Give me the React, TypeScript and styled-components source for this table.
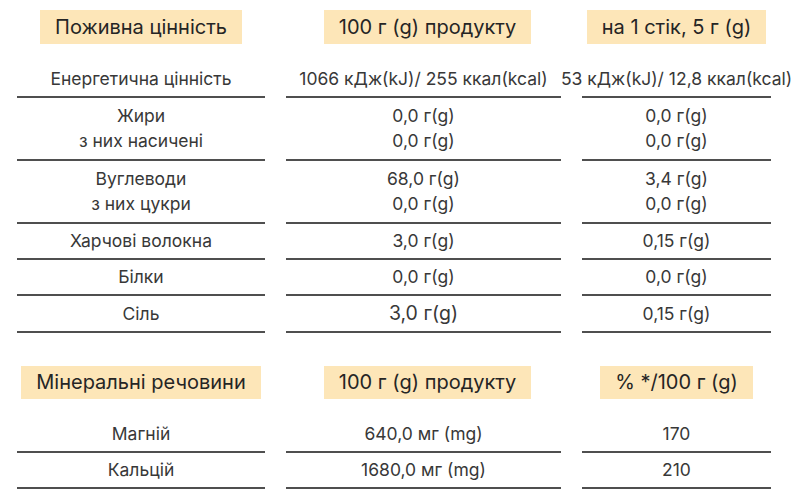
import React from "react";
import styled, { createGlobalStyle } from "styled-components";

const Global = createGlobalStyle`
  html, body { margin: 0; padding: 0; background: #ffffff; }
  body { font-family: Inter, "Noto Sans", sans-serif; color: #333333; }
`;

const Page = styled.div`
  width: 800px;
  height: 496px;
  box-sizing: border-box;
  padding: 10px 0 0 17px;
  display: flex;
  flex-direction: column;
  overflow: hidden;
`;

const Section = styled.section<{ $top?: number }>`
  margin-top: ${(p) => p.$top ?? 0}px;
  display: flex;
  flex-direction: column;
`;

const Grid = styled.div`
  display: grid;
  grid-template-columns: 248px 275px 189px;
  column-gap: 21px;
`;

const HeadRow = styled(Grid)`
  margin-bottom: 18px;
`;

const HeadCell = styled.div<{ $shift?: number }>`
  display: flex;
  justify-content: center;
  transform: translateX(${(p) => p.$shift ?? 0}px);
`;

const Badge = styled.div<{ $h: number }>`
  height: ${(p) => p.$h}px;
  padding: 0 15px;
  background: #fde6b8;
  color: #252525;
  font-size: 20px;
  line-height: ${(p) => p.$h}px;
  white-space: nowrap;
`;

const Cell = styled.div<{ $tall?: boolean; $big?: boolean; $h?: number }>`
  border-bottom: 2px solid #4f4f4f;
  display: flex;
  flex-direction: column;
  align-items: center;
  justify-content: center;
  padding: ${(p) => (p.$tall ? "5px 0 6px" : "0")};
  min-height: ${(p) => (p.$tall ? 50 : p.$h ?? 34)}px;
  font-size: ${(p) => (p.$big ? 19.5 : 17.5)}px;
  line-height: ${(p) => (p.$tall ? 25 : p.$h ?? 34)}px;
  color: #383838;
  white-space: nowrap;
`;

type Row = { cells: string[][]; big?: number; h?: number };

const nutrition: Row[] = [
  { cells: [["Енергетична цінність"], ["1066 кДж(kJ)/ 255 ккал(kcal)"], ["53 кДж(kJ)/ 12,8 ккал(kcal)"]] },
  { cells: [["Жири", "з них насичені"], ["0,0 г(g)", "0,0 г(g)"], ["0,0 г(g)", "0,0 г(g)"]] },
  { cells: [["Вуглеводи", "з них цукри"], ["68,0 г(g)", "0,0 г(g)"], ["3,4 г(g)", "0,0 г(g)"]] },
  { cells: [["Харчові волокна"], ["3,0 г(g)"], ["0,15 г(g)"]] },
  { cells: [["Білки"], ["0,0 г(g)"], ["0,0 г(g)"]] },
  { cells: [["Сіль"], ["3,0 г(g)"], ["0,15 г(g)"]], big: 1, h: 35 },
];

const minerals: Row[] = [
  { cells: [["Магній"], ["640,0 мг (mg)"], ["170"]] },
  { cells: [["Кальцій"], ["1680,0 мг (mg)"], ["210"]] },
];

function Table({ heads, rows, h, top }: { heads: string[]; rows: Row[]; h: number; top?: number }) {
  return (
    <Section $top={top}>
      <HeadRow>
        {heads.map((t, i) => (
          <HeadCell key={i} $shift={i === 1 ? 4 : 0}>
            <Badge $h={h}>{t}</Badge>
          </HeadCell>
        ))}
      </HeadRow>
      {rows.map((r, ri) => (
        <Grid key={ri}>
          {r.cells.map((lines, ci) => (
            <Cell key={ci} $tall={lines.length > 1} $big={r.big === ci} $h={r.h}>
              {lines.map((l, li) => (
                <span key={li}>{l}</span>
              ))}
            </Cell>
          ))}
        </Grid>
      ))}
    </Section>
  );
}

export default function App() {
  return (
    <>
      <Global />
      <Page>
        <Table heads={["Поживна цінність", "100 г (g) продукту", "на 1 стік, 5 г (g)"]} rows={nutrition} h={34} />
        <Table heads={["Мінеральні речовини", "100 г (g) продукту", "% */100 г (g)"]} rows={minerals} h={33} top={33} />
      </Page>
    </>
  );
}
